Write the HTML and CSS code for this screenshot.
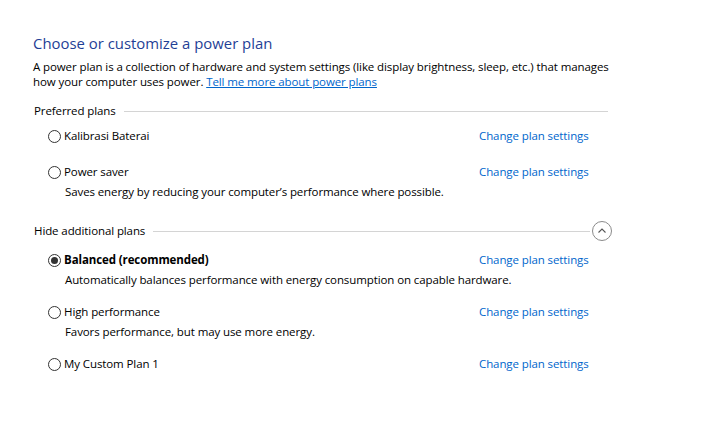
FILE: index.html
```html
<!DOCTYPE html>
<html>
<head>
<meta charset="utf-8">
<link rel="stylesheet" href="styles.css">
</head>
<body>
<div class="page">
  <h1 class="title">Choose or customize a power plan</h1>
  <p class="desc">A power plan is a collection of hardware and system settings (like display brightness, sleep, etc.) that manages how your computer uses power. <a class="link underline" href="#">Tell me more about power plans</a></p>

  <div class="group-header first">
    <span class="group-label">Preferred plans</span>
    <span class="rule"></span>
  </div>

  <div class="plan short">
    <div class="plan-row">
      <label class="plan-name"><svg class="radio" width="13" height="13" viewBox="0 0 13 13"><circle cx="6.5" cy="6.5" r="6" fill="#fff" stroke="#333" stroke-width="1"/></svg>Kalibrasi Baterai</label>
      <a class="link" href="#">Change plan settings</a>
    </div>
  </div>

  <div class="plan">
    <div class="plan-row">
      <label class="plan-name"><svg class="radio" width="13" height="13" viewBox="0 0 13 13"><circle cx="6.5" cy="6.5" r="6" fill="#fff" stroke="#333" stroke-width="1"/></svg>Power saver</label>
      <a class="link" href="#">Change plan settings</a>
    </div>
    <div class="plan-desc">Saves energy by reducing your computer’s performance where possible.</div>
  </div>

  <div class="group-header second">
    <span class="group-label">Hide additional plans</span>
    <span class="rule"></span>
    <span class="collapse"><svg width="20" height="20" viewBox="0 0 20 20"><circle cx="10" cy="10" r="9.5" fill="#fff" stroke="#8a8a8a" stroke-width="1"/><path d="M6.5 11.5 L10 8 L13.5 11.5" fill="none" stroke="#555" stroke-width="1.1"/></svg></span>
  </div>

  <div class="plan">
    <div class="plan-row">
      <label class="plan-name bold"><svg class="radio" width="13" height="13" viewBox="0 0 13 13"><circle cx="6.5" cy="6.5" r="6" fill="#fff" stroke="#333" stroke-width="1"/><circle cx="6.5" cy="6.5" r="3.5" fill="#333"/></svg>Balanced (recommended)</label>
      <a class="link" href="#">Change plan settings</a>
    </div>
    <div class="plan-desc">Automatically balances performance with energy consumption on capable hardware.</div>
  </div>

  <div class="plan">
    <div class="plan-row">
      <label class="plan-name"><svg class="radio" width="13" height="13" viewBox="0 0 13 13"><circle cx="6.5" cy="6.5" r="6" fill="#fff" stroke="#333" stroke-width="1"/></svg>High performance</label>
      <a class="link" href="#">Change plan settings</a>
    </div>
    <div class="plan-desc">Favors performance, but may use more energy.</div>
  </div>

  <div class="plan short">
    <div class="plan-row">
      <label class="plan-name"><svg class="radio" width="13" height="13" viewBox="0 0 13 13"><circle cx="6.5" cy="6.5" r="6" fill="#fff" stroke="#333" stroke-width="1"/></svg>My Custom Plan 1</label>
      <a class="link" href="#">Change plan settings</a>
    </div>
  </div>
</div>
</body>
</html>
```
FILE: styles.css
```css
html, body {
  margin: 0;
  padding: 0;
  background: #fff;
}
body {
  font-family: "Open Sans", "Noto Sans", sans-serif;
  font-size: 11.5px;
  letter-spacing: -0.1px;
  color: #000;
}
.page {
  display: flex;
  flex-direction: column;
  padding: 32px 0 0 33px;
  width: 575px;
}
.title {
  margin: 0;
  font-size: 14.9px;
  font-weight: normal;
  letter-spacing: 0;
  line-height: 22px;
  color: #1f3f96;
}
.desc {
  margin: 5px 0 0;
  line-height: 15px;
  width: 585px;
}
.link {
  color: #0066cc;
  text-decoration: none;
}
.link.underline {
  text-decoration: underline;
}
.group-header {
  display: flex;
  align-items: center;
  height: 20px;
  line-height: 20px;
}
.group-header.first {
  margin-top: 12px;
  margin-bottom: 5px;
}
.group-header.second {
  margin-top: 7px;
  margin-bottom: 9px;
}
.group-label {
  padding-left: 1px;
  margin-right: 8px;
}
.rule {
  flex: 1;
  height: 1px;
  background: #d4d4d4;
}
.collapse {
  display: flex;
  margin-left: 2px;
  margin-right: -4px;
}
.plan {
  padding-left: 15px;
  margin-bottom: 13px;
}
.plan.short {
  margin-bottom: 16px;
}
.plan-row {
  display: grid;
  grid-template-columns: 431px auto;
  line-height: 20px;
}
.plan-name {
  display: flex;
  align-items: center;
  gap: 3px;
}
.plan-name.bold {
  font-weight: bold;
}
.radio {
  flex: none;
}
.plan-desc {
  padding-left: 17px;
  margin-top: 1px;
  line-height: 18px;
}
```
